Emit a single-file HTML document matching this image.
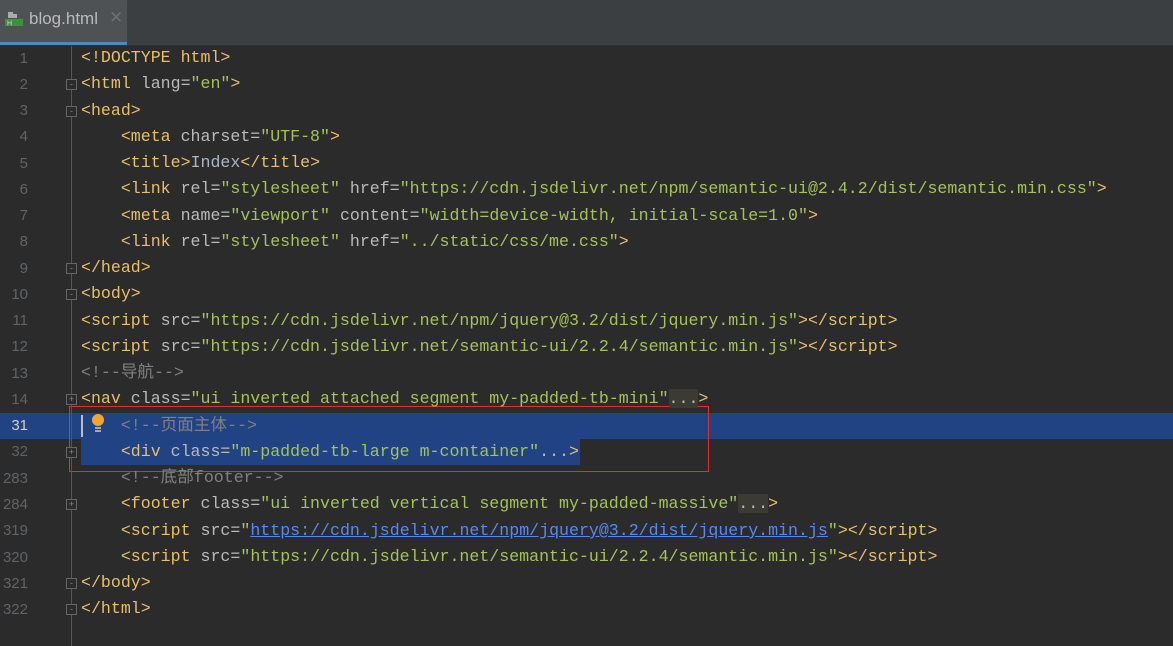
<!DOCTYPE html>
<html><head><style>
body{margin:0;width:1173px;height:646px;background:#2b2b2b;overflow:hidden;position:relative;font-family:"Liberation Mono","Noto Sans CJK SC",monospace;}
#tabs{position:absolute;left:0;top:0;width:1173px;height:45px;background:#3c3f41;border-bottom:1px solid #323232}
#tab{position:absolute;left:0;top:0;width:127px;height:42px;background:#4e5254;border-bottom:3px solid #4a88c7}
#tab span{position:absolute;left:29px;top:9px;font:17px "Liberation Sans",sans-serif;color:#bbbbbb}
#tab i{position:absolute;left:109px;top:8px;font:17px "Liberation Sans",sans-serif;color:#6e6e6e;font-style:normal}
.ln{position:absolute;left:0;width:28px;text-align:right;color:#606366;font-size:15px;font-family:"Liberation Sans",sans-serif}
.l{position:absolute;left:81px;white-space:pre;font-size:16.6px;color:#a9b7c6;height:26px;line-height:26px}
.t{color:#e8bf6a}.a{color:#bababa}.s{color:#a5c25c}.c{color:#808080}.u{color:#548af7;text-decoration:underline}
.f{color:#bababa;background:#3b3b33}
#gut{position:absolute;left:71px;top:46px;width:1px;height:600px;background:#555}
.fold{position:absolute;left:66px;width:9px;height:9px;border:1px solid #666;background:#2b2b2b;color:#888;font-size:9px;line-height:9px;text-align:center;font-family:"Liberation Sans",sans-serif}
</style></head><body>
<div id="tabs"><div id="tab">
<svg style="position:absolute;left:4px;top:10px" width="20" height="20"><path d="M4 2h5v2h4v4H4z" fill="#aaa"/><rect x="1" y="9" width="18" height="7" fill="#3e8f3e"/><text x="3" y="15.5" font-size="7" fill="#ddd" font-family="Liberation Sans">H</text></svg>
<span>blog.html</span><i>✕</i></div></div>
<div style="position:absolute;left:0;top:413px;width:1173px;height:26px;background:#214283"></div>
<div style="position:absolute;left:81px;top:439px;width:499px;height:26px;background:#214283"></div>
<div style="position:absolute;left:81px;top:415px;width:2px;height:22px;background:#bbb"></div>
<div style="position:absolute;left:69px;top:406px;width:638px;height:64px;border:1px solid #e03030"></div>
<div id="gut"></div>
<svg style="position:absolute;left:90px;top:413px" width="16" height="22"><circle cx="8" cy="7" r="6" fill="#f0a732"/><rect x="5" y="14" width="6" height="2" fill="#aaa"/><rect x="5" y="17" width="6" height="2" fill="#aaa"/></svg>

<div class="ln" style="top:50px">1</div><div class="l" style="top:45px"><span class="t">&lt;!DOCTYPE html&gt;</span></div>
<div class="ln" style="top:76px">2</div><div class="l" style="top:71px"><span class="t">&lt;html </span><span class="a">lang=</span><span class="s">"en"</span><span class="t">&gt;</span></div>
<div class="ln" style="top:102px">3</div><div class="l" style="top:98px"><span class="t">&lt;head&gt;</span></div>
<div class="ln" style="top:128px">4</div><div class="l" style="top:124px">    <span class="t">&lt;meta </span><span class="a">charset=</span><span class="s">"UTF-8"</span><span class="t">&gt;</span></div>
<div class="ln" style="top:155px">5</div><div class="l" style="top:150px">    <span class="t">&lt;title&gt;</span>Index<span class="t">&lt;/title&gt;</span></div>
<div class="ln" style="top:181px">6</div><div class="l" style="top:176px">    <span class="t">&lt;link </span><span class="a">rel=</span><span class="s">"stylesheet" </span><span class="a">href=</span><span class="s">"https://cdn.jsdelivr.net/npm/semantic-ui@2.4.2/dist/semantic.min.css"</span><span class="t">&gt;</span></div>
<div class="ln" style="top:207px">7</div><div class="l" style="top:203px">    <span class="t">&lt;meta </span><span class="a">name=</span><span class="s">"viewport" </span><span class="a">content=</span><span class="s">"width=device-width, initial-scale=1.0"</span><span class="t">&gt;</span></div>
<div class="ln" style="top:233px">8</div><div class="l" style="top:229px">    <span class="t">&lt;link </span><span class="a">rel=</span><span class="s">"stylesheet" </span><span class="a">href=</span><span class="s">"../static/css/me.css"</span><span class="t">&gt;</span></div>
<div class="ln" style="top:260px">9</div><div class="l" style="top:255px"><span class="t">&lt;/head&gt;</span></div>
<div class="ln" style="top:286px">10</div><div class="l" style="top:281px"><span class="t">&lt;body&gt;</span></div>
<div class="ln" style="top:312px">11</div><div class="l" style="top:308px"><span class="t">&lt;script </span><span class="a">src=</span><span class="s">"https://cdn.jsdelivr.net/npm/jquery@3.2/dist/jquery.min.js"</span><span class="t">&gt;&lt;/script&gt;</span></div>
<div class="ln" style="top:338px">12</div><div class="l" style="top:334px"><span class="t">&lt;script </span><span class="a">src=</span><span class="s">"https://cdn.jsdelivr.net/semantic-ui/2.2.4/semantic.min.js"</span><span class="t">&gt;&lt;/script&gt;</span></div>
<div class="ln" style="top:365px">13</div><div class="l" style="top:360px"><span class="c">&lt;!--导航--&gt;</span></div>
<div class="ln" style="top:391px">14</div><div class="l" style="top:386px"><span class="t">&lt;nav </span><span class="a">class=</span><span class="s">"ui inverted attached segment my-padded-tb-mini"</span><span class="f">...</span><span class="t">&gt;</span></div>
<div class="ln" style="top:417px;color:#d0d0d0">31</div><div class="l" style="top:413px">    <span class="c">&lt;!--页面主体--&gt;</span></div>
<div class="ln" style="top:443px">32</div><div class="l" style="top:439px">    <span class="t">&lt;div </span><span class="a">class=</span><span class="s">"m-padded-tb-large m-container"</span><span class="a">...</span><span class="t">&gt;</span></div>
<div class="ln" style="top:470px">283</div><div class="l" style="top:465px">    <span class="c">&lt;!--底部footer--&gt;</span></div>
<div class="ln" style="top:496px">284</div><div class="l" style="top:491px">    <span class="t">&lt;footer </span><span class="a">class=</span><span class="s">"ui inverted vertical segment my-padded-massive"</span><span class="f">...</span><span class="t">&gt;</span></div>
<div class="ln" style="top:522px">319</div><div class="l" style="top:518px">    <span class="t">&lt;script </span><span class="a">src=</span><span class="s">"</span><span class="u">https://cdn.jsdelivr.net/npm/jquery@3.2/dist/jquery.min.js</span><span class="s">"</span><span class="t">&gt;&lt;/script&gt;</span></div>
<div class="ln" style="top:549px">320</div><div class="l" style="top:544px">    <span class="t">&lt;script </span><span class="a">src=</span><span class="s">"https://cdn.jsdelivr.net/semantic-ui/2.2.4/semantic.min.js"</span><span class="t">&gt;&lt;/script&gt;</span></div>
<div class="ln" style="top:575px">321</div><div class="l" style="top:570px"><span class="t">&lt;/body&gt;</span></div>
<div class="ln" style="top:601px">322</div><div class="l" style="top:596px"><span class="t">&lt;/html&gt;</span></div>

<div class="fold" style="top:79px">-</div>
<div class="fold" style="top:106px">-</div>
<div class="fold" style="top:263px">-</div>
<div class="fold" style="top:289px">-</div>
<div class="fold" style="top:394px">+</div>
<div class="fold" style="top:447px">+</div>
<div class="fold" style="top:499px">+</div>
<div class="fold" style="top:578px">-</div>
<div class="fold" style="top:604px">-</div>
</body></html>
